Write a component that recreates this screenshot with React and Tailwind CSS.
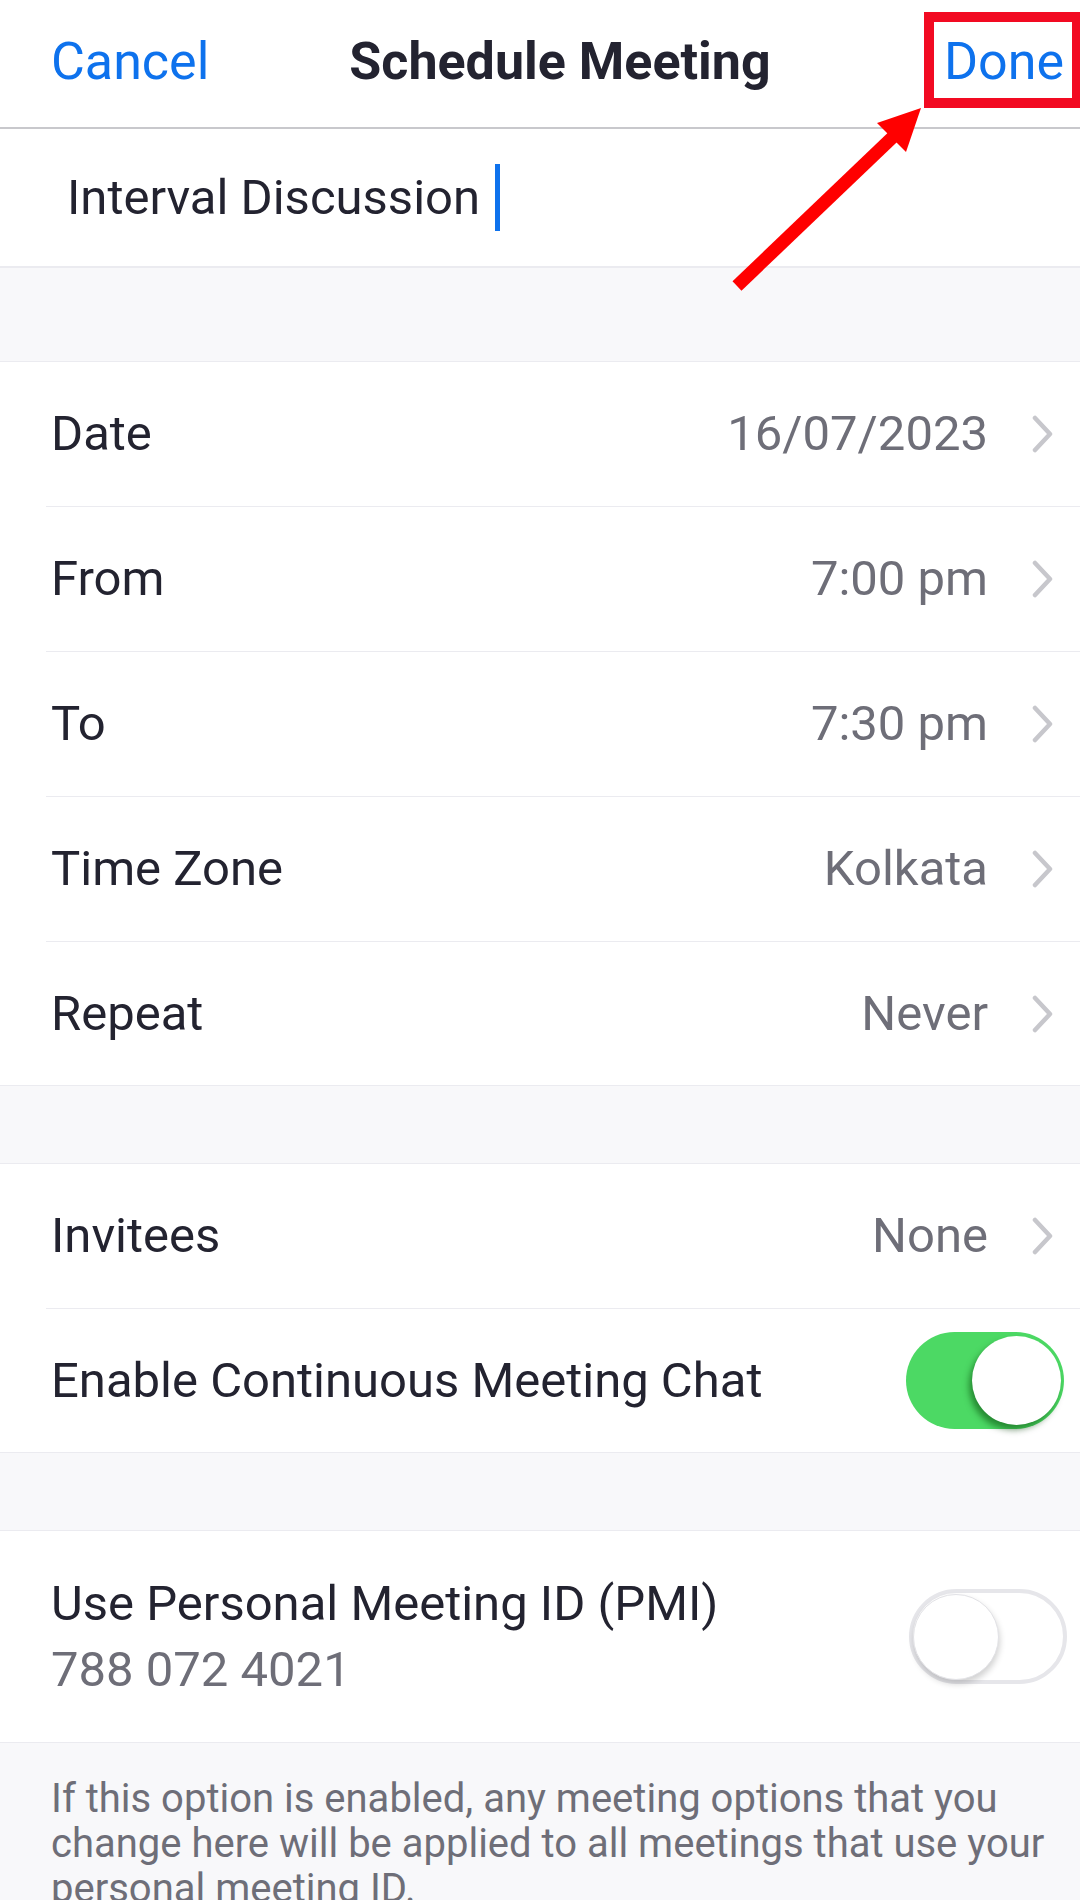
import React from "react";

const font = { fontFamily: "Roboto, 'Noto Sans', sans-serif" };

function Chevron() {
  return (
    <svg width="24" height="38" viewBox="0 0 24 38" className="shrink-0">
      <polyline
        points="5,3 20,19 5,35"
        fill="none"
        stroke="#c7c7cc"
        strokeWidth="4.5"
        strokeLinecap="round"
        strokeLinejoin="round"
      />
    </svg>
  );
}

function Toggle({ on }) {
  if (on) {
    return (
      <div className="w-[158px] h-[97px] rounded-full bg-[#4cd964] flex items-center justify-end pr-[3px] shrink-0">
        <div className="w-[89px] h-[89px] rounded-full bg-white shadow-[-3px_5px_6px_rgba(0,60,0,0.5)]" />
      </div>
    );
  }
  return (
    <div className="w-[158px] h-[95px] rounded-full bg-white border-[4px] border-[#e6e6ea] flex items-center justify-start shrink-0">
      <div className="w-[86px] h-[86px] rounded-full bg-white border border-[#e2e2e6] shadow-[1px_4px_6px_rgba(0,0,0,0.18)]" />
    </div>
  );
}

function Row({ label, value, last }) {
  return (
    <div className={"h-[144px] flex items-center pl-[51px] pr-[26px] " + (last ? "border-b border-[#ebebf0]" : "")}>
      <span className="text-[49px] text-[#232330]">{label}</span>
      <span className="ml-auto text-[49px] text-[#6e6e78] mr-[42px]">{value}</span>
      <Chevron />
    </div>
  );
}

function Divider() {
  return <div className="ml-[46px] h-px bg-[#ebebf0]" />;
}

function Band({ h }) {
  return <div className={"bg-[#f8f8fa] border-b border-[#ebebf0] " + h} />;
}

export default function App() {
  return (
    <div className="relative w-[1080px] min-h-[1900px] overflow-hidden bg-[#f8f8fa]" style={font}>
      {/* nav bar */}
      <div className="h-[129px] bg-white border-b-[2px] border-[#c8c8cc] flex items-center pl-[51px] pr-[16px] pb-[3px]">
        <span className="text-[52px] text-[#0e72ed]">Cancel</span>
        <span className="ml-[140px] text-[52px] font-bold text-[#232330]">Schedule Meeting</span>
        <span className="ml-auto text-[52px] text-[#0e72ed]">Done</span>
      </div>

      {/* topic input */}
      <div className="h-[139px] bg-white border-b-[2px] border-[#ebebf0] flex items-center pl-[67px]">
        <span className="text-[49px] text-[#232330]">Interval Discussion</span>
        <span className="ml-[15px] w-[5px] h-[67px] bg-[#0e72ed]" />
      </div>

      <Band h="h-[94px]" />

      <div className="bg-white">
        <Row label="Date" value="16/07/2023" />
        <Divider />
        <Row label="From" value="7:00 pm" />
        <Divider />
        <Row label="To" value="7:30 pm" />
        <Divider />
        <Row label="Time Zone" value="Kolkata" />
        <Divider />
        <Row label="Repeat" value="Never" last />
      </div>

      <Band h="h-[78px]" />

      <div className="bg-white border-b border-[#ebebf0]">
        <Row label="Invitees" value="None" />
        <Divider />
        <div className="h-[143px] flex items-center pl-[51px] pr-[16px]">
          <span className="text-[49px] text-[#232330]">Enable Continuous Meeting Chat</span>
          <div className="ml-auto">
            <Toggle on />
          </div>
        </div>
      </div>

      <Band h="h-[78px]" />

      <div className="h-[212px] bg-white border-b border-[#ebebf0] flex items-center pl-[51px] pr-[13px]">
        <div className="flex flex-col">
          <span className="text-[49px] leading-[66px] text-[#232330]">Use Personal Meeting ID (PMI)</span>
          <span className="text-[49px] leading-[66px] text-[#6e6e78]">788 072 4021</span>
        </div>
        <div className="ml-auto">
          <Toggle on={false} />
        </div>
      </div>

      {/* footnote */}
      <div className="pt-[33px] pl-[51px] pr-[24px]">
        <p className="text-[40px] leading-[45px] text-[#6e6e78]">
          If this option is enabled, any meeting options that you change here will be applied to all meetings that use your personal meeting ID.
        </p>
      </div>

      {/* annotation overlay */}
      <div className="absolute left-[924px] top-[12px] w-[158px] h-[96px] border-[10px] border-[#f20a22]" />
      <svg className="absolute left-0 top-0 pointer-events-none" width="1080" height="320">
        <line x1="737" y1="286" x2="896" y2="134" stroke="#ff0000" strokeWidth="13" />
        <polygon points="921,108 877,123 906,152" fill="#ff0000" />
      </svg>
    </div>
  );
}
